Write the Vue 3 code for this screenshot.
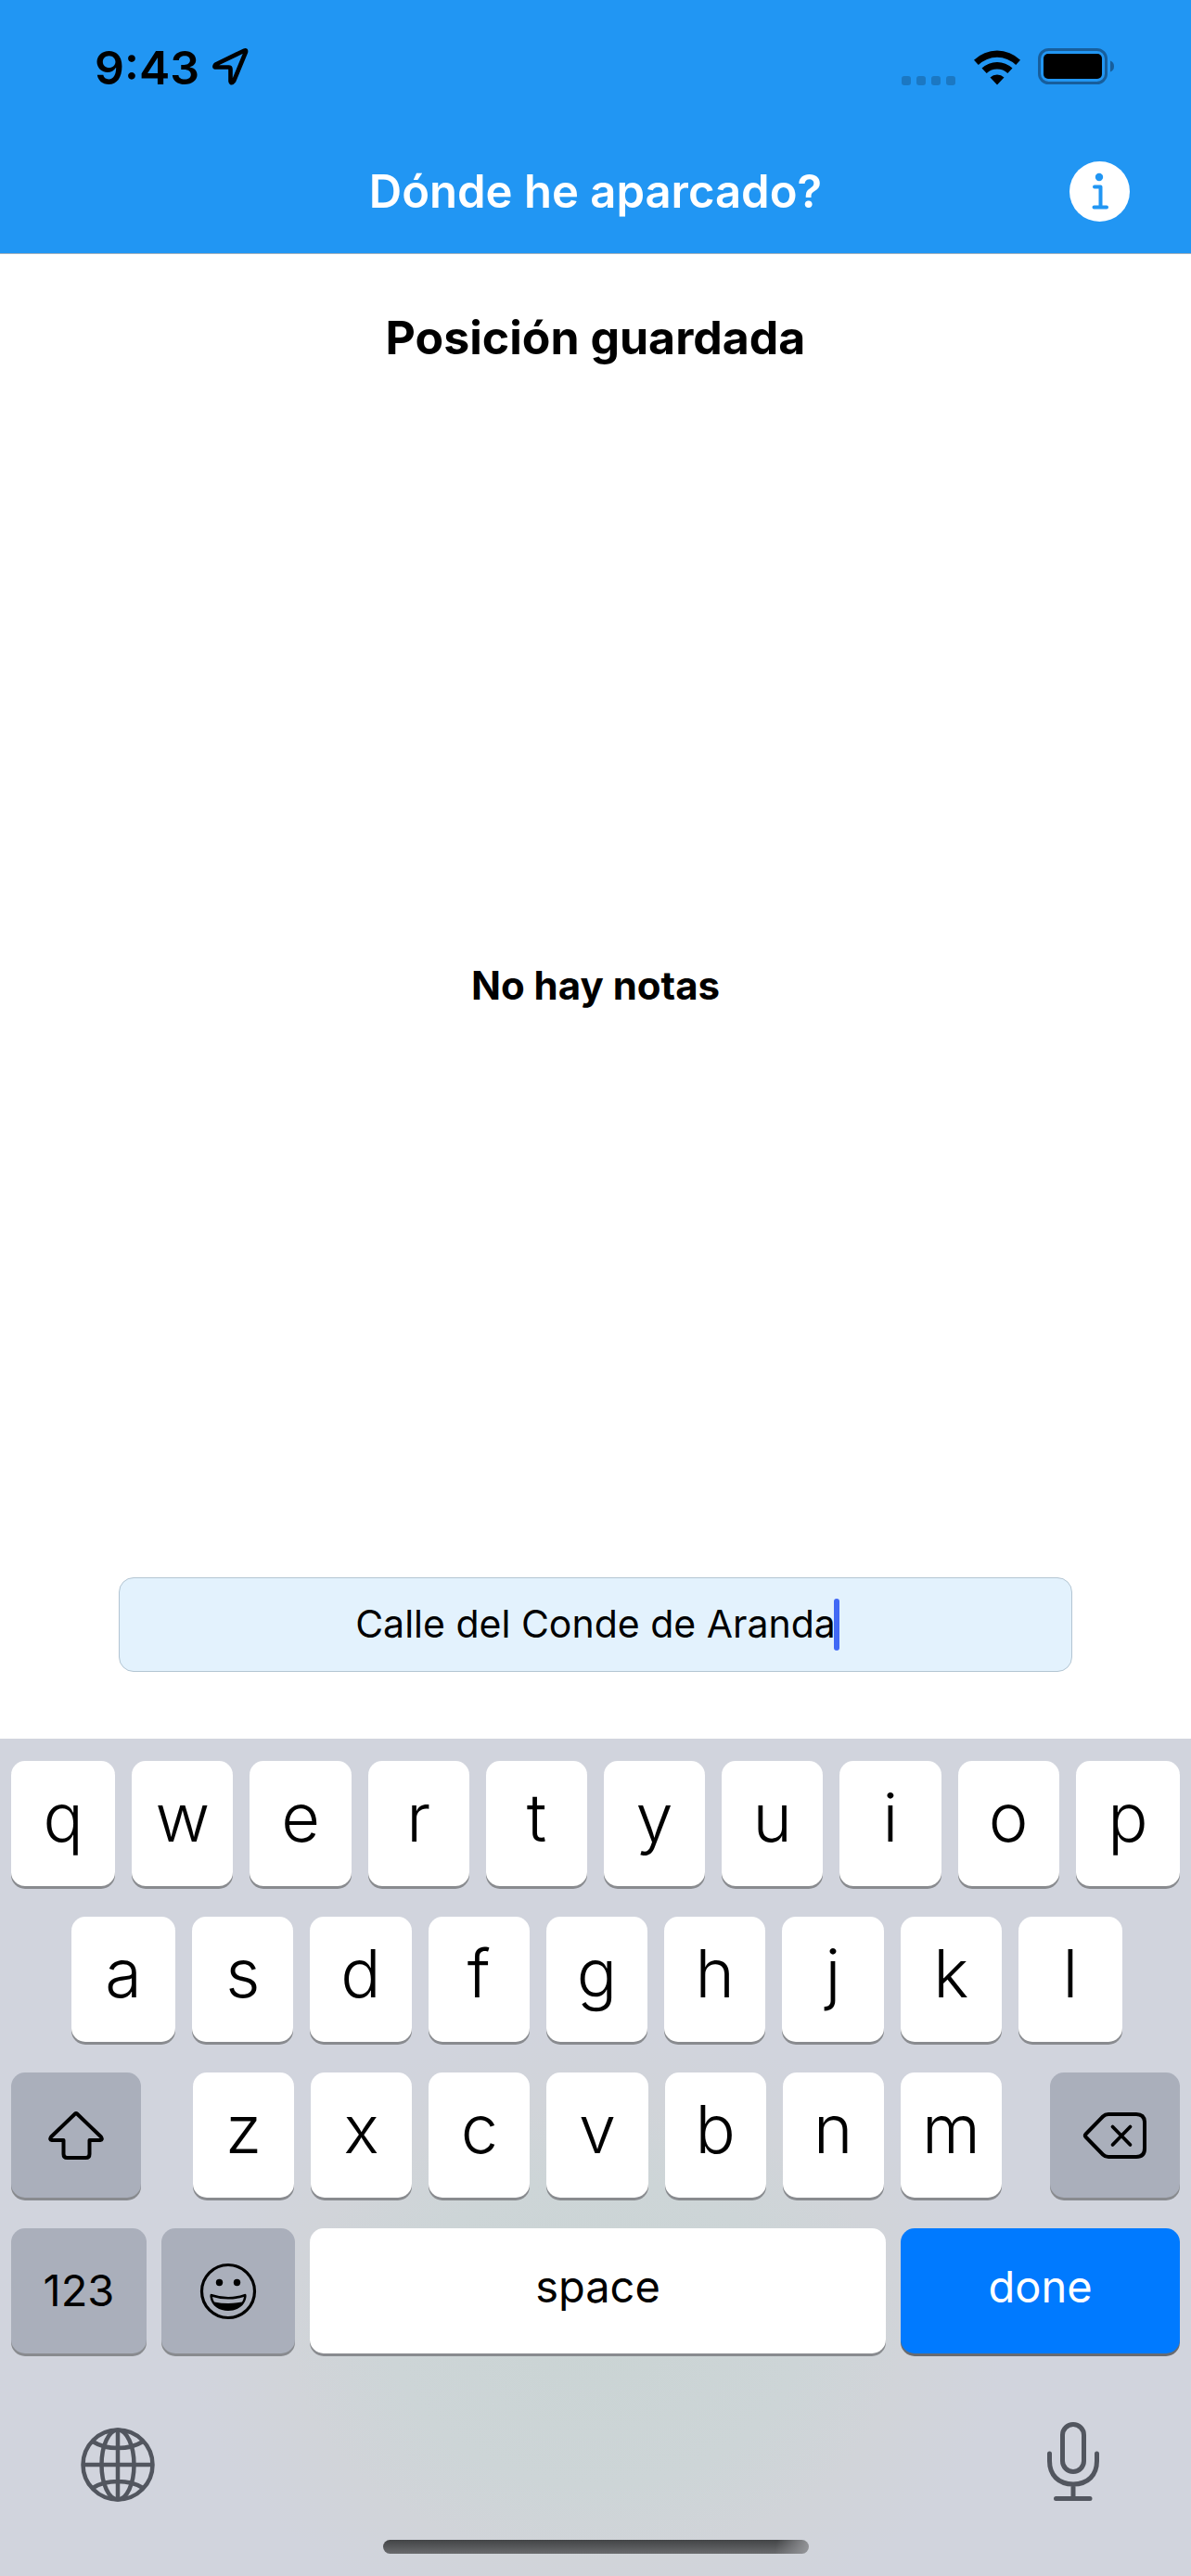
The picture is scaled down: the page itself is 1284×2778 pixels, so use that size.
<script setup>
import { ref } from 'vue'

const topRow = 'qwertyuiop'.split('')
const middleRow = 'asdfghjkl'.split('')
const bottomRow = 'zxcvbnm'.split('')
const note = ref('Calle del Conde de Aranda')
</script>

<template>
  <div class="app">
    <header class="header">
      <div class="status">
        <div class="status-side">
          <span class="time">9:43</span>
          <svg class="location" viewBox="0 0 40 42" width="40" height="42" aria-hidden="true">
            <path d="M35.500 4.500 4.500 19.500Q2 22.500 5 22.500H18.500Q20.500 22.500 20.500 24.500V37.500Q21.500 41 24 37.500L37 6Q37.500 3.500 35.500 4.500Z" fill="none" stroke="#000" stroke-width="4.600" stroke-linejoin="round" />
          </svg>
        </div>
        <div class="status-side">
          <svg class="dots" viewBox="0 0 58 10" width="58" height="10" aria-hidden="true">
            <g fill="#1b78c3">
              <rect width="10" height="10" rx="3" />
              <rect x="16" width="10" height="10" rx="3" />
              <rect x="32" width="10" height="10" rx="3" />
              <rect x="48" width="10" height="10" rx="3" />
            </g>
          </svg>
          <svg class="wifi" viewBox="0 0 52 38" width="52" height="38" aria-hidden="true">
            <path d="M1 10.700A36 36 0 0 1 51 10.700L46.200 16A29 29 0 0 0 5.800 16ZM9.500 19.500A24 24 0 0 1 42.500 19.500L37.300 25A16.500 16.500 0 0 0 14.700 25ZM18.500 29.500A11 11 0 0 1 33.500 29.500L26 37.500Z" />
          </svg>
          <svg class="battery" viewBox="0 0 83 40" width="83" height="40" aria-hidden="true">
            <rect x="1.500" y="1.500" width="72" height="36" rx="10" fill="none" stroke="#175e9c" stroke-width="3" />
            <rect x="6" y="6" width="63" height="27" rx="5" />
            <path d="M78 13.500Q82 15 82 19.500T78 25.500Z" fill="#175e9c" />
          </svg>
        </div>
      </div>
      <div class="navbar">
        <h1>Dónde he aparcado?</h1>
        <button class="info" type="button" aria-label="Información">
          <svg viewBox="0 0 65 65" width="65" height="65" aria-hidden="true">
            <circle cx="32.500" cy="32.500" r="32.500" fill="#fff" />
            <circle cx="32" cy="17" r="4.200" fill="#2196f3" />
            <path d="M27 27.500H33.500V49.500M26.500 49.500H40" fill="none" stroke="#2196f3" stroke-width="4" stroke-linecap="round" stroke-linejoin="round" />
          </svg>
        </button>
      </div>
    </header>

    <main class="content">
      <h2>Posición guardada</h2>
      <section class="notes">
        <p>No hay notas</p>
      </section>
      <form class="note-form" @submit.prevent>
        <input v-model="note" type="text" aria-label="Nota" />
        <span class="caret"></span>
      </form>
    </main>

    <section class="keyboard" aria-label="Teclado">
      <div class="row row-top">
        <button v-for="k in topRow" :key="k" class="key letter" type="button">{{ k }}</button>
      </div>
      <div class="row row-middle">
        <button v-for="k in middleRow" :key="k" class="key letter" type="button">{{ k }}</button>
      </div>
      <div class="row row-bottom">
        <button class="key dark" type="button" aria-label="shift">
          <svg viewBox="0 0 60 54" width="60" height="54" aria-hidden="true">
            <path d="M29 3.500Q30 2.500 31 3.500L57 28.500Q59 31.500 56 32H44.500V47Q44.500 51 40.500 51H20.500Q16.500 51 16.500 47V32H4Q1 31.500 3 28.500Z" fill="none" stroke="#000" stroke-width="4" stroke-linejoin="round" />
          </svg>
        </button>
        <div class="letters">
          <button v-for="k in bottomRow" :key="k" class="key letter" type="button">{{ k }}</button>
        </div>
        <button class="key dark" type="button" aria-label="delete">
          <svg viewBox="0 0 70 52" width="70" height="52" aria-hidden="true">
            <g fill="none" stroke="#000" stroke-linecap="round" stroke-linejoin="round">
              <path d="M3.500 24.500Q2 26 3.500 27.500L22 46.500Q24.500 49 28 49H58Q67 49 67 40V12Q67 3 58 3H28Q24.500 3 22 5.500Z" stroke-width="4" />
              <path d="M32.500 16.500 51.500 36M51.500 16.500 32.500 36" stroke-width="3.800" />
            </g>
          </svg>
        </button>
      </div>
      <div class="row row-actions">
        <button class="key dark numbers" type="button">123</button>
        <button class="key dark" type="button" aria-label="emoji">
          <svg viewBox="0 0 62 62" width="62" height="62" aria-hidden="true">
            <circle cx="31" cy="31" r="28.500" fill="none" stroke="#000" stroke-width="3.200" />
            <circle cx="21.500" cy="21.500" r="3.700" />
            <circle cx="40.500" cy="21.500" r="3.700" />
            <path d="M13.500 34Q31 40 48.500 34Q51 33 50.500 37C48 57 14 57 11.500 37Q11 33 13.500 34Z" />
            <path d="M14 37Q31 42 48 37Q47.500 40 46 42.500Q31 45.500 16 42.500Q14.500 40 14 37Z" fill="#aaafbb" />
          </svg>
        </button>
        <button class="key word" type="button">space</button>
        <button class="key word done" type="button">done</button>
      </div>
      <div class="tools">
        <button class="tool" type="button" aria-label="Cambiar idioma">
          <svg viewBox="0 0 80 80" width="80" height="80" aria-hidden="true">
            <g fill="none" stroke="#52565f" stroke-width="4.500">
              <circle cx="40" cy="40" r="37.500" />
              <ellipse cx="40" cy="40" rx="17.500" ry="37.500" />
              <path d="M40 2V78M2 40H78M13 15Q24 22 40 22T67 15M13 65Q24 58 40 58T67 65" />
            </g>
          </svg>
        </button>
        <button class="tool" type="button" aria-label="Dictado">
          <svg viewBox="0 0 56 86" width="56" height="86" aria-hidden="true">
            <g fill="none" stroke="#52565f" stroke-width="5" stroke-linecap="round">
              <rect x="16.500" y="2.500" width="23" height="51" rx="11.500" />
              <path d="M2.500 34V42C2.500 57 12 67 28 67S53.500 57 53.500 42V34M28 67V82M9.500 82.500H46" />
            </g>
          </svg>
        </button>
      </div>
      <div class="home"></div>
    </section>
  </div>
</template>

<style>
body {
  margin: 0;
}
</style>

<style scoped>
.app {
  display: flex;
  flex-direction: column;
  min-height: 100vh;
  background: #fff;
  color: #000;
  font-family: Inter, "Liberation Sans", sans-serif;
}

button {
  display: flex;
  align-items: center;
  justify-content: center;
  padding: 0;
  border: 0;
  background: none;
  color: inherit;
  font: inherit;
}

svg {
  display: block;
}

h1,
h2,
p {
  margin: 0;
}

.header {
  background: #2196f3;
  border-bottom: 1px solid #a3b1bd;
}

.status {
  display: flex;
  align-items: flex-end;
  justify-content: space-between;
  height: 92px;
  padding: 0 82px 48px 102px;
}

.status-side {
  display: flex;
  align-items: flex-end;
}

.time {
  font-size: 50px;
  font-weight: 600;
  line-height: 38px;
}

.location {
  margin-left: 13px;
}

.wifi {
  margin: 0 18px;
}

.dots {
  margin-right: 1px;
}

.navbar {
  display: grid;
  grid-template-columns: 1fr auto 1fr;
  align-items: center;
  height: 133px;
  padding: 0 66px;
}

h1 {
  grid-column: 2;
  font-size: 49px;
  font-weight: 600;
  line-height: 60px;
  color: #fff;
}

.info {
  justify-self: end;
}

.content {
  display: flex;
  flex: 1;
  flex-direction: column;
}

h2 {
  padding: 60px 0 30px;
  font-size: 50px;
  font-weight: 700;
  line-height: 60px;
  text-align: center;
}

.notes {
  display: flex;
  flex: 1;
  align-items: center;
  justify-content: center;
}

.notes p {
  font-size: 42px;
  font-weight: 700;
  line-height: 50px;
}

.note-form {
  position: relative;
  width: 80%;
  margin: 0 auto 72px;
}

input {
  display: block;
  box-sizing: border-box;
  width: 100%;
  height: 102px;
  padding: 0 0 2px;
  border: 1px solid #b3c5d2;
  border-radius: 16px;
  outline: 0;
  background: #e3f2fd;
  color: #000;
  font: 400 41px/50px Inter, "Liberation Sans", sans-serif;
  text-align: center;
}

.caret {
  position: absolute;
  top: 23px;
  left: 50%;
  width: 6px;
  height: 56px;
  margin-left: 257px;
  border-radius: 3px;
  background: #4169f5;
}

.keyboard {
  display: flex;
  flex-direction: column;
  gap: 33px;
  padding: 24px 12px;
  background: radial-gradient(ellipse 440px 330px at 50% 640px, #cad4d4, #cdd5d7 50%, #d1d4d9 75%, #d1d4dd) #d1d4dd;
}

.row {
  display: grid;
  gap: 18px;
}

.row-top {
  grid-template-columns: 112fr repeat(8, 109fr) 112fr;
}

.row-middle {
  grid-template-columns: 112fr repeat(7, 109fr) 112fr;
  padding: 0 62px 0 65px;
}

.row-bottom {
  grid-template-columns: 140fr 876fr 140fr;
  gap: 52px;
}

.letters {
  display: grid;
  grid-template-columns: repeat(7, 1fr);
  gap: 18px;
  padding-left: 4px;
}

.row-actions {
  grid-template-columns: 146fr 144fr 621fr 301fr;
  gap: 16px;
}

.key {
  box-sizing: border-box;
  height: 135px;
  border-radius: 15px;
  background: #fff;
  box-shadow: 0 3px 0 #898b8f;
}

.letter {
  padding-bottom: 14px;
  font-size: 72px;
  font-weight: 350;
  line-height: 84px;
}

.dark {
  background: #aaafbb;
}

.numbers {
  padding-bottom: 2px;
  font-size: 47px;
}

.word {
  padding-bottom: 10px;
  font-size: 47px;
}

.done {
  background: #007aff;
  color: #fff;
  box-shadow: 0 3px 0 #686b70;
}

.tools {
  display: flex;
  align-items: flex-end;
  justify-content: space-between;
  height: 86px;
  padding: 41px 87px 8px 75px;
}

.home {
  align-self: center;
  width: 459px;
  height: 15px;
  border-radius: 8px;
  background: linear-gradient(100deg, transparent 92%, #96979b), linear-gradient(#424446, #6a6b6e);
}
</style>
